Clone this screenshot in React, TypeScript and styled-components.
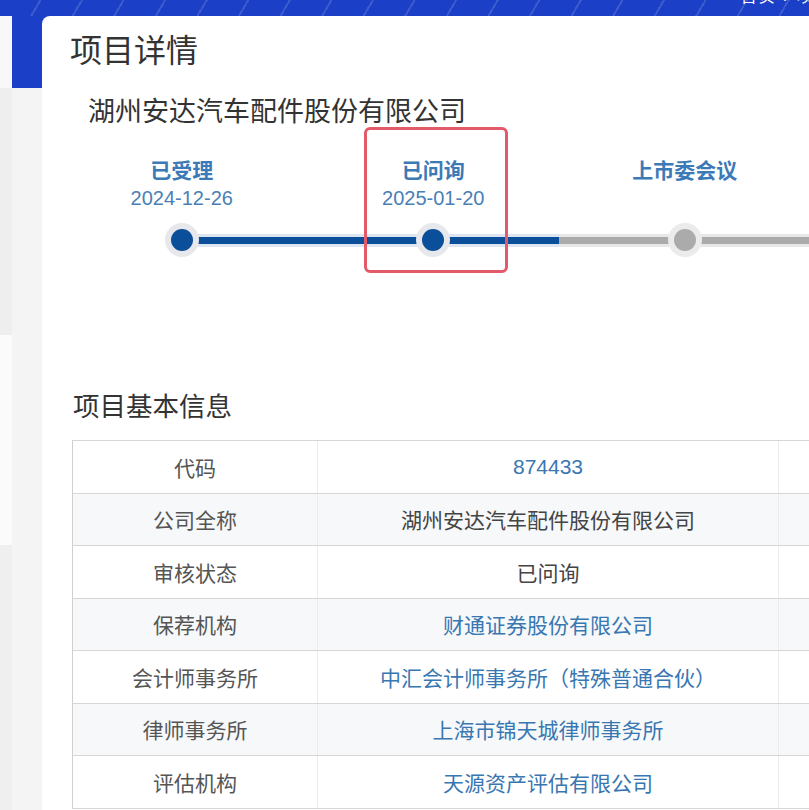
import styled, { createGlobalStyle, css } from "styled-components";

const GlobalStyle = createGlobalStyle`
  html, body {
    margin: 0;
    padding: 0;
    background: #f4f4f4;
    overflow: hidden;
  }
  body {
    font-family: "Liberation Sans", "Noto Sans CJK SC", sans-serif;
  }
`;

const BLUE_BAND = "#1b3fc6";

const Page = styled.div`
  width: 809px;
  height: 810px;
  overflow: hidden;
  display: flex;
  flex-direction: column;
`;

const TopBand = styled.header`
  height: 16px;
  flex: none;
  overflow: hidden;
  display: flex;
  justify-content: flex-end;
  background-color: ${BLUE_BAND};
  background-image: repeating-linear-gradient(
    120deg,
    transparent 0 34px,
    rgba(255, 255, 255, 0.14) 34px 36px
  );
`;

const Crumb = styled.span`
  color: #fff;
  font-size: 16px;
  line-height: 16px;
  margin-top: -11px;
  margin-right: -6px;
  white-space: nowrap;
  letter-spacing: 2px;
`;

const Body = styled.div`
  flex: 1;
  display: flex;
  min-height: 0;
  background:
    linear-gradient(${BLUE_BAND}, ${BLUE_BAND}) no-repeat 12px 0 / 100% 72px,
    #f4f4f4;
`;

const SideStrip = styled.aside`
  width: 12px;
  flex: none;
  display: flex;
  flex-direction: column;
  background: #f0f0f0;
  border-top-right-radius: 4px;
  overflow: hidden;
`;

const SideBlock = styled.div<{ $h: number; $tone: string }>`
  height: ${(p) => p.$h}px;
  flex: none;
  background: ${(p) => p.$tone};
`;

const Gutter = styled.div`
  width: 30px;
  flex: none;
`;

const Card = styled.main`
  flex: 1;
  min-width: 0;
  background: #fff;
  border-top-left-radius: 8px;
  padding: 16px 0 0 28px;
  overflow: hidden;
`;

const PageTitle = styled.h1`
  margin: 0;
  font-size: 32px;
  line-height: 38px;
  font-weight: 400;
  color: #333;
`;

const CompanyName = styled.h2`
  margin: 25px 0 0 18px;
  font-size: 27px;
  line-height: 34px;
  font-weight: 400;
  color: #333;
  white-space: nowrap;
`;

const Steps = styled.ol`
  list-style: none;
  margin: 28px 0 0 -14px;
  padding: 0;
  display: flex;
`;

const Step = styled.li`
  width: 251.5px;
  flex: none;
  position: relative;
  display: flex;
  flex-direction: column;
  align-items: center;
`;

const StepName = styled.div`
  font-size: 21px;
  line-height: 28px;
  font-weight: 700;
  color: #3c7ab7;
`;

const StepDate = styled.div`
  font-size: 20px;
  line-height: 26px;
  color: #4a80b6;
  min-height: 26px;
`;

const RailRow = styled.div`
  margin-top: 12px;
  width: 100%;
  height: 34px;
  display: flex;
  align-items: center;
`;

const Rail = styled.div<{ $state: "done" | "todo" | "none" }>`
  flex: 1;
  height: 7px;
  box-sizing: content-box;
  ${(p) =>
    p.$state === "done"
      ? css`
          background: #0b4f9a;
          border-top: 3px solid #dde6f0;
          border-bottom: 3px solid #dde6f0;
        `
      : p.$state === "todo"
        ? css`
            background: #ababab;
            border-top: 3px solid #e8e8e8;
            border-bottom: 3px solid #e8e8e8;
          `
        : css`
            background: transparent;
          `}
`;

const Dot = styled.span<{ $done: boolean }>`
  width: 22px;
  height: 22px;
  flex: none;
  border-radius: 50%;
  position: relative;
  z-index: 1;
  background: ${(p) => (p.$done ? "#0b4f9a" : "#ababab")};
  box-shadow: 0 0 0 6px ${(p) => (p.$done ? "#e6e8eb" : "#ebebeb")};
`;

const Highlight = styled.span`
  position: absolute;
  left: 56px;
  top: -30px;
  width: 144px;
  height: 146px;
  box-sizing: border-box;
  border: 3px solid #e35a6b;
  border-radius: 6px;
  pointer-events: none;
`;

const SectionTitle = styled.h3`
  margin: 133px 0 0 3px;
  font-size: 26.5px;
  line-height: 34px;
  font-weight: 400;
  color: #333;
`;

const InfoTable = styled.div`
  margin: 16px 0 0 2px;
  width: 900px;
  border-top: 1px solid #d6d6d6;
  border-left: 1px solid #d0d0d0;
`;

const InfoRow = styled.div<{ $striped: boolean }>`
  display: grid;
  grid-template-columns: 245px 461px 1fr;
  height: 52.5px;
  box-sizing: border-box;
  border-bottom: 1px solid #d6d6d6;
  background: ${(p) => (p.$striped ? "#f6f8fa" : "#fff")};
`;

const Cell = styled.div<{ $tone?: "label" | "text" | "link" }>`
  display: flex;
  align-items: center;
  justify-content: center;
  font-size: 21px;
  white-space: nowrap;
  border-right: 1px solid #ececec;
  color: ${(p) =>
    p.$tone === "link" ? "#3877b1" : p.$tone === "text" ? "#444" : "#555"};
`;

type RailState = "done" | "todo" | "none";
type StepData = { name: string; date?: string; done: boolean; left: RailState; right: RailState; highlight?: boolean };

const steps: StepData[] = [
  { name: "已受理", date: "2024-12-26", done: true, left: "none", right: "done" },
  { name: "已问询", date: "2025-01-20", done: true, left: "done", right: "done", highlight: true },
  { name: "上市委会议", done: false, left: "todo", right: "todo" },
];

const rows: { label: string; value: string; tone: "text" | "link" }[] = [
  { label: "代码", value: "874433", tone: "link" },
  { label: "公司全称", value: "湖州安达汽车配件股份有限公司", tone: "text" },
  { label: "审核状态", value: "已问询", tone: "text" },
  { label: "保荐机构", value: "财通证券股份有限公司", tone: "link" },
  { label: "会计师事务所", value: "中汇会计师事务所（特殊普通合伙）", tone: "link" },
  { label: "律师事务所", value: "上海市锦天城律师事务所", tone: "link" },
  { label: "评估机构", value: "天源资产评估有限公司", tone: "link" },
];

export default function App() {
  return (
    <Page>
      <GlobalStyle />
      <TopBand>
        <Crumb>首页 › 项</Crumb>
      </TopBand>
      <Body>
        <SideStrip>
          <SideBlock $h={72} $tone="#f8f8f8" />
          <SideBlock $h={247} $tone="#eeeeee" />
          <SideBlock $h={210} $tone="#fbfbfb" />
          <SideBlock $h={265} $tone="#efefef" />
        </SideStrip>
        <Gutter />
        <Card>
          <PageTitle>项目详情</PageTitle>
          <CompanyName>湖州安达汽车配件股份有限公司</CompanyName>
          <Steps>
            {steps.map((s) => (
              <Step key={s.name}>
                {s.highlight && <Highlight />}
                <StepName>{s.name}</StepName>
                <StepDate>{s.date ?? ""}</StepDate>
                <RailRow>
                  <Rail $state={s.left} />
                  <Dot $done={s.done} />
                  <Rail $state={s.right} />
                </RailRow>
              </Step>
            ))}
          </Steps>
          <SectionTitle>项目基本信息</SectionTitle>
          <InfoTable>
            {rows.map((r, i) => (
              <InfoRow key={r.label} $striped={i % 2 === 1}>
                <Cell $tone="label">{r.label}</Cell>
                <Cell $tone={r.tone}>{r.value}</Cell>
                <Cell />
              </InfoRow>
            ))}
          </InfoTable>
        </Card>
      </Body>
    </Page>
  );
}
